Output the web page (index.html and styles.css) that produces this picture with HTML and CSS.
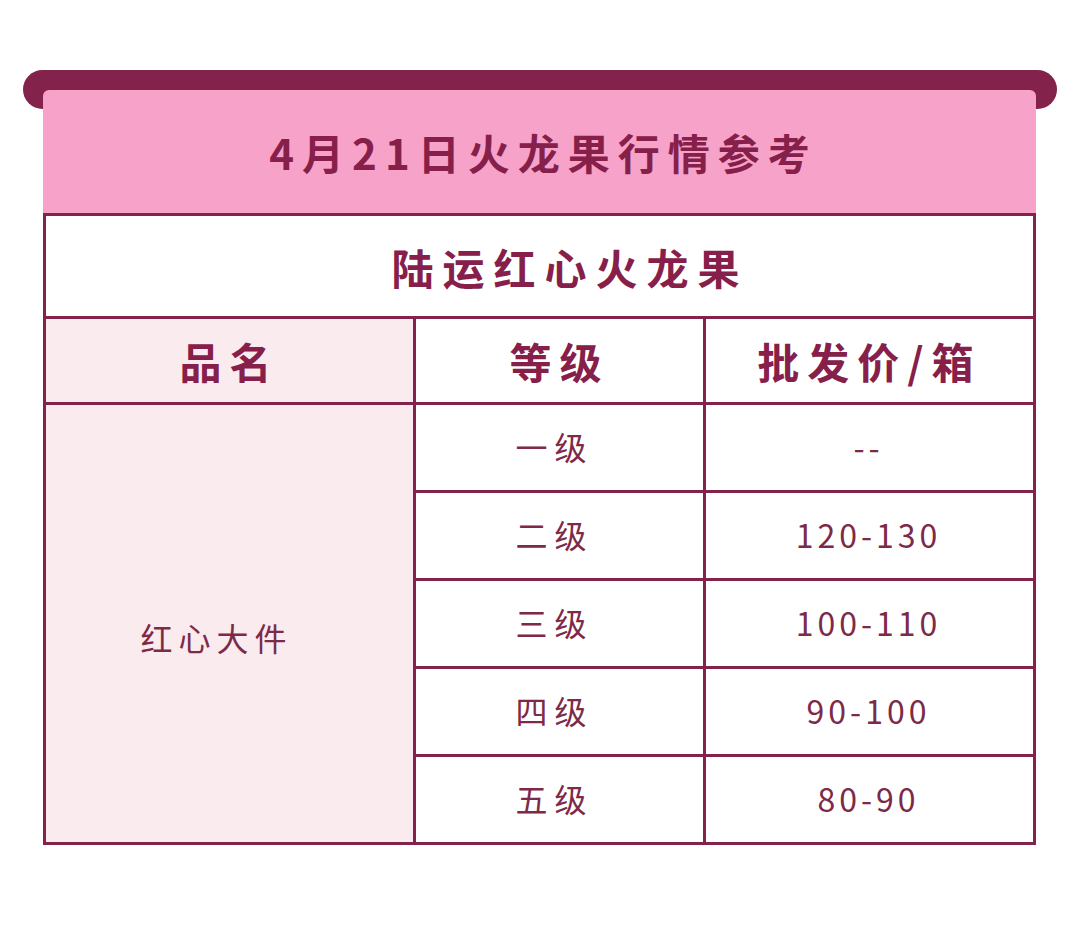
FILE: index.html
```html
<!DOCTYPE html>
<html lang="zh-CN">
<head>
<meta charset="utf-8">
<title>4月21日火龙果行情参考</title>
<link rel="stylesheet" href="styles.css">
</head>
<body>
<div class="board">
  <div class="rod"></div>
  <div class="sheet">
    <div class="title">4月21日火龙果行情参考</div>
    <div class="grid">
      <div class="cell sub bold">陆运红心火龙果</div>
      <div class="cell head bold tint">品名</div>
      <div class="cell head bold">等级</div>
      <div class="cell head bold">批发价/箱</div>
      <div class="cell name tint">红心大件</div>
      <div class="cell data grade">一级</div>
      <div class="cell data price">--</div>
      <div class="cell data grade">二级</div>
      <div class="cell data price">120-130</div>
      <div class="cell data grade">三级</div>
      <div class="cell data price">100-110</div>
      <div class="cell data grade">四级</div>
      <div class="cell data price">90-100</div>
      <div class="cell data grade">五级</div>
      <div class="cell data price">80-90</div>
    </div>
  </div>
</div>
</body>
</html>
```
FILE: styles.css
```css
body {
  margin: 0;
  background: #ffffff;
  font-family: "Noto Sans CJK SC", "Noto Sans", sans-serif;
  color: #85204a;
}
.board {
  width: 1034px;
  margin: 70px 0 0 23px;
}
.rod {
  height: 39px;
  border-radius: 20px;
  background: #83224a;
}
.sheet {
  margin: -19px 21px 0 20px;
  position: relative;
}
.title {
  height: 123px;
  background: #f7a2c9;
  border-radius: 6px 6px 0 0;
  display: flex;
  align-items: center;
  justify-content: center;
  font-size: 42px;
  font-weight: 700;
  letter-spacing: 8px;
  padding-left: 8px;
  color: #86204a;
}
.grid {
  display: grid;
  grid-template-columns: 367px 287px 327px;
  grid-template-rows: 100px 83px repeat(5, 85px);
  gap: 3px;
  padding: 3px;
  background: #83224a;
}
.cell {
  background: #ffffff;
  display: flex;
  align-items: center;
  justify-content: center;
}
.bold {
  font-weight: 700;
  font-size: 42px;
  letter-spacing: 8px;
  color: #86204a;
}
.sub {
  grid-column: 1 / -1;
  letter-spacing: 9px;
  padding-left: 61px;
}
.head {
  padding-left: 0;
}
.tint {
  background: #f9ebee;
}
.name {
  grid-row: 3 / span 5;
  grid-column: 1;
  font-size: 32px;
  letter-spacing: 6px;
  padding: 26px 32px 0 6px;
  color: #7d2a48;
}
.data {
  font-size: 32px;
  color: #7d2a48;
  padding-bottom: 4px;
}
.grade {
  letter-spacing: 7px;
  padding-right: 10px;
}
.price {
  letter-spacing: 4px;
  padding-right: 2px;
}
```
